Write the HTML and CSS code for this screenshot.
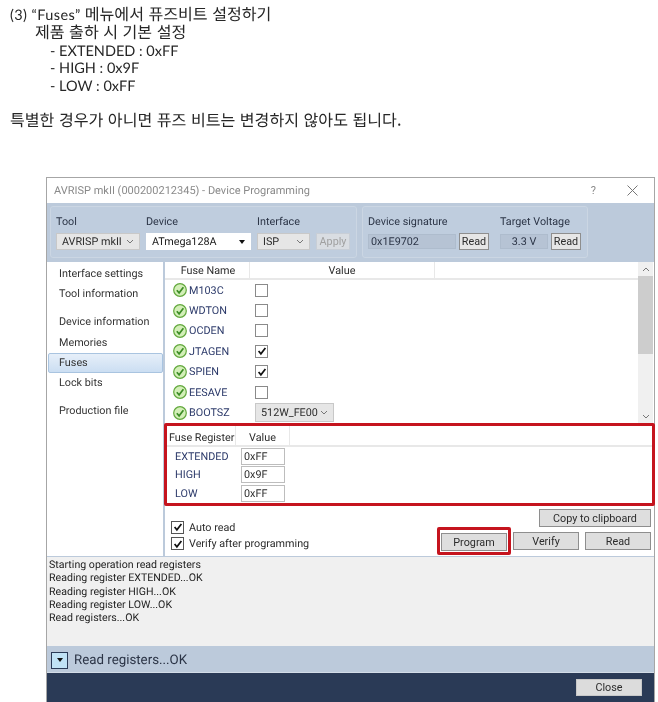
FILE: index.html
```html
<!DOCTYPE html>
<html lang="ko">
<head>
<meta charset="utf-8">
<title>Fuses</title>
<link rel="stylesheet" href="styles.css">
</head>
<body>
<svg class="defs" width="0" height="0" aria-hidden="true">
  <symbol id="ok" viewBox="0 0 14 14">
    <circle cx="7" cy="7" r="6.3" fill="#d3efb8" stroke="#62a83c" stroke-width="1.2"/>
    <path d="M3.8 7.2 6.1 9.8 10.4 4.3" fill="none" stroke="#3c8c26" stroke-width="1.7"/>
  </symbol>
  <symbol id="tick" viewBox="0 0 12 12">
    <path d="M2.6 6 4.9 8.8 9.4 3" fill="none" stroke="#111" stroke-width="1.7"/>
  </symbol>
  <symbol id="chev" viewBox="0 0 8 5">
    <path d="M1 1 4 4 7 1" fill="none" stroke="#777" stroke-width="1"/>
  </symbol>
</svg>

<section class="intro">
  <p class="l0">(3) “Fuses” <span class="ko">메뉴에서 퓨즈비트 설정하기</span></p>
  <p class="l1"><span class="ko">제품 출하 시 기본 설정</span></p>
  <p class="l2">- EXTENDED : 0xFF</p>
  <p class="l2">- HIGH : 0x9F</p>
  <p class="l2">- LOW : 0xFF</p>
  <p class="l0 note"><span class="ko">특별한 경우가 아니면 퓨즈 비트는 변경하지 않아도 됩니다.</span></p>
</section>

<main class="window">
  <header class="titlebar">
    <span class="title">AVRISP mkII (000200212345) - Device Programming</span>
    <span class="help">?</span>
    <svg class="x" width="11" height="11" viewBox="0 0 11 11"><path d="M.5.5 10.5 10.5M10.5.5.5 10.5" stroke="#777" fill="none"/></svg>
  </header>

  <div class="toolbar">
    <div class="group g1">
      <div class="field f-tool"><label>Tool</label><div class="combo">AVRISP mkII<svg class="chev" width="8" height="5"><use href="#chev"/></svg></div></div>
      <div class="field f-device"><label>Device</label><div class="combo white">ATmega128A<i class="caret"></i></div></div>
      <div class="field f-iface"><label>Interface</label><div class="combo">ISP<svg class="chev" width="8" height="5"><use href="#chev"/></svg></div></div>
      <button class="btn apply">Apply</button>
    </div>
    <div class="group g2">
      <div class="field"><label>Device signature</label><div class="pair"><div class="ro sig">0x1E9702</div><button class="btn read">Read</button></div></div>
      <div class="field"><label>Target Voltage</label><div class="pair"><div class="ro volt">3.3 V</div><button class="btn read">Read</button></div></div>
    </div>
  </div>

  <div class="body">
    <nav class="nav">
      <a class="item">Interface settings</a>
      <a class="item">Tool information</a>
      <a class="item gap">Device information</a>
      <a class="item">Memories</a>
      <a class="item on">Fuses</a>
      <a class="item">Lock bits</a>
      <a class="item gap">Production file</a>
    </nav>
    <div class="pane">
      <div class="fuses">
        <div class="list">
          <div class="thead">
            <span class="th c1">Fuse Name</span><span class="th c2">Value</span>
          </div>
          <div class="row"><svg class="ok" width="14" height="14"><use href="#ok"/></svg><span class="name">M103C</span><span class="cb"></span></div>
          <div class="row"><svg class="ok" width="14" height="14"><use href="#ok"/></svg><span class="name">WDTON</span><span class="cb"></span></div>
          <div class="row"><svg class="ok" width="14" height="14"><use href="#ok"/></svg><span class="name">OCDEN</span><span class="cb"></span></div>
          <div class="row"><svg class="ok" width="14" height="14"><use href="#ok"/></svg><span class="name">JTAGEN</span><span class="cb"><svg width="12" height="12"><use href="#tick"/></svg></span></div>
          <div class="row"><svg class="ok" width="14" height="14"><use href="#ok"/></svg><span class="name">SPIEN</span><span class="cb"><svg width="12" height="12"><use href="#tick"/></svg></span></div>
          <div class="row"><svg class="ok" width="14" height="14"><use href="#ok"/></svg><span class="name">EESAVE</span><span class="cb"></span></div>
          <div class="row"><svg class="ok" width="14" height="14"><use href="#ok"/></svg><span class="name">BOOTSZ</span><div class="combo boot">512W_FE00<svg class="chev" width="8" height="5"><use href="#chev"/></svg></div></div>
        </div>
        <div class="scroll">
          <svg width="8" height="5" class="up"><use href="#chev"/></svg>
          <div class="thumb"></div>
          <svg width="8" height="5" class="down"><use href="#chev"/></svg>
        </div>
      </div>

      <div class="registers">
        <div class="rhead"><span class="rh r1">Fuse Register</span><span class="rh r2">Value</span></div>
        <div class="rrow"><span class="rname">EXTENDED</span><span class="rval">0xFF</span></div>
        <div class="rrow"><span class="rname">HIGH</span><span class="rval">0x9F</span></div>
        <div class="rrow"><span class="rname">LOW</span><span class="rval">0xFF</span></div>
      </div>

      <div class="actions">
        <div class="checks">
          <div class="check"><span class="cb small"><svg width="12" height="12"><use href="#tick"/></svg></span>Auto read</div>
          <div class="check"><span class="cb small"><svg width="12" height="12"><use href="#tick"/></svg></span>Verify after programming</div>
        </div>
        <div class="buttons">
          <button class="btn big copy">Copy to clipboard</button>
          <div class="btnrow">
            <div class="mark"><button class="btn big wide">Program</button></div>
            <button class="btn big wide">Verify</button>
            <button class="btn big wide last">Read</button>
          </div>
        </div>
      </div>
    </div>
  </div>

  <div class="log">
    <div>Starting operation read registers</div>
    <div>Reading register EXTENDED...OK</div>
    <div>Reading register HIGH...OK</div>
    <div>Reading register LOW...OK</div>
    <div>Read registers...OK</div>
  </div>

  <div class="status">
    <span class="toggle"><i class="caret"></i></span>
    <span class="stext">Read registers...OK</span>
  </div>

  <footer class="foot"><button class="btn close">Close</button></footer>
</main>
</body>
</html>
```

FILE: styles.css
```css
* { box-sizing: border-box; }
html, body { margin: 0; padding: 0; background: #fff; }
body {
  width: 658px;
  height: 702px;
  overflow: hidden;
  font-family: Roboto, Lato, sans-serif;
  color: #222;
  text-rendering: geometricPrecision;
}
.defs { position: absolute; }

/* intro text */
.intro {
  padding: 7px 0 0 10px;
  height: 177px;
  font-family: Lato, "Noto Sans CJK KR", sans-serif;
  font-size: 14.5px;
  line-height: 17.8px;
  color: #262626;
  filter: blur(0.3px);
}
.intro p { margin: 0; white-space: nowrap; }
.l0 { letter-spacing: 0.4px; }
.ko { font-size: 16.1px; line-height: 0; letter-spacing: 0; font-family: "Noto Sans CJK KR", sans-serif; }
.l1 { padding-left: 25px; }
.l2 { padding-left: 40px; }
.note { margin-top: 17px !important; }

/* window */
.window {
  width: 609px;
  height: 525px;
  margin-left: 46px;
  border: 1px solid #a6a6a6;
  border-bottom: 0;
  display: flex;
  flex-direction: column;
  font-size: 10.8px;
  color: #2c2c2c;
  white-space: nowrap;
  filter: blur(0.3px);
}
.titlebar {
  flex: 0 0 25px;
  display: flex;
  align-items: center;
  padding: 0 16px 0 7px;
  background: #fff;
}
.title { flex: 1; color: #8a8a8a; font-size: 11px; }
.help { color: #8a8a8a; font-size: 11px; margin-right: 31px; }

/* toolbar */
.toolbar {
  flex: 0 0 59px;
  background: #bccadb;
  display: flex;
  gap: 5px;
  padding: 3px 0 4px 3px;
}
.group {
  height: 52px;
  border: 1px solid #cbd6e3;
  border-radius: 3px;
  background: #bfcdde;
  display: flex;
  padding: 8px 5px 0;
  color: #2b3446;
}
.g1 { width: 307px; align-items: flex-start; }
.g2 { width: 226px; gap: 11px; }
.field label { display: block; height: 18px; line-height: 14px; }
.f-tool { width: 90px; }
.f-device { width: 111px; }
.f-iface { width: 59px; }
.combo {
  height: 17px;
  border: 1px solid #c8c8c8;
  background: #e6e6e6;
  display: flex;
  align-items: center;
  justify-content: space-between;
  padding: 0 5px;
  color: #2c2c2c;
}
.chev { flex: none; }
.f-tool .combo { width: 84px; }
.f-device .combo { width: 105px; }
.f-iface .combo { width: 53px; }
.combo.white { background: #fff; border-color: #fff; color: #222; }
.caret {
  display: block;
  flex: none;
  width: 0;
  height: 0;
  border: 3px solid transparent;
  border-top: 4px solid #111;
  border-bottom: 0;
}
.btn {
  margin: 0;
  padding: 0;
  font: inherit;
  color: #2c2c2c;
  background: #e6e6e6;
  border: 1px solid #8e8e8e;
  height: 17px;
}
.apply {
  width: 34px;
  margin-top: 18px;
  color: #a0a0a0;
  background: #d9dde2;
  border-color: #c8ced6;
}
.pair { display: flex; gap: 3px; align-items: center; }
.ro {
  height: 15px;
  border: 1px solid #aebccd;
  background: #b6c3d4;
  line-height: 13px;
  padding-left: 2px;
  color: #2b3446;
}
.sig { width: 88px; }
.volt { width: 48px; text-align: center; padding: 0; }
.read { width: 30px; }

/* body */
.body { flex: 0 0 295px; display: flex; background: #fff; border-bottom: 1px solid #bccadb; }
.nav {
  flex: 0 0 118px;
  border-right: 2px solid #bccadb;
  padding-top: 2px;
  display: flex;
  flex-direction: column;
  color: #333;
}
.item {
  height: 20.4px;
  line-height: 20px;
  padding-left: 12px;
}
.item.gap { margin-top: 7.5px; }
.item.on {
  width: 115px;
  margin-left: 1px;
  background: linear-gradient(#e6eff9, #cbdef2);
  border: 1px solid #a9c4e0;
  border-radius: 2px;
  padding-left: 10px;
  line-height: 18px;
}
.pane { flex: 1; min-width: 0; display: flex; flex-direction: column; }
.fuses { flex: 0 0 161px; display: flex; }
.list { flex: 0 0 473px; }
.thead {
  height: 18px;
  display: flex;
  border-bottom: 2px solid #e8e8e8;
  line-height: 17px;
}
.th { border-right: 1px solid #e8e8e8; text-align: center; }
.c1 { width: 85px; padding-left: 2px; }
.c2 { width: 185px; }
.row {
  height: 20.4px;
  display: flex;
  align-items: center;
  padding-left: 8px;
}
.ok { flex: none; }
.name { width: 66px; padding-left: 2px; color: #2c3a6a; }
.cb {
  display: block;
  width: 13px;
  height: 13px;
  margin-left: 2px;
  border: 1px solid #8a8a8a;
  background: #fff;
}
.cb svg { display: block; margin: -0.5px; }
.combo.boot { width: 79px; height: 19px; margin-left: 2px; }
.scroll {
  flex: 0 0 15px;
  background: #f0f0f0;
  display: flex;
  flex-direction: column;
  align-items: center;
}
.scroll .up { transform: rotate(180deg); margin: 5px 0 4px; }
.thumb { width: 15px; height: 78px; background: #cdcdcd; }
.scroll .down { margin-top: auto; margin-bottom: 4px; }

/* registers (marked in red) */
.registers {
  height: 83px;
  width: 491px;
  border: 3px solid #c5141e;
  border-radius: 2px;
  background: #fff;
  margin-left: -1px;
}
.rhead { height: 21px; display: flex; border-bottom: 2px solid #e8e8e8; line-height: 24px; }
.rh { border-right: 1px solid #e8e8e8; }
.r1 { width: 69px; padding-left: 2px; }
.r2 { width: 54px; text-align: center; }
.rrow { height: 18.5px; display: flex; align-items: center; padding-left: 8px; }
.rname { width: 66px; color: #2c3a6a; }
.rval {
  width: 44px;
  height: 17px;
  border: 1px solid #bdbdbd;
  line-height: 15px;
  padding-left: 2px;
}

/* actions */
.actions { flex: 1; display: flex; justify-content: space-between; padding-right: 3px; }
.checks { padding: 13px 0 0 6px; }
.check { height: 16.5px; display: flex; align-items: center; gap: 5px; }
.cb.small { margin-left: 0; border-color: #555; }
.buttons { display: flex; flex-direction: column; align-items: flex-end; padding-top: 3px; }
.big { height: 18px; background: #dedede; border-color: #8e8e8e; }
.copy { width: 112px; }
.btnrow { display: flex; gap: 6px; align-items: center; }
.wide { width: 66px; }
.mark {
  border: 3px solid #c5141e;
  border-radius: 2px;
  padding: 3px 1px 2px;
  width: 74px;
  height: 28px;
  display: flex;
  justify-content: center;
  margin-right: -4px;
}

/* log */
.log {
  flex: 0 0 89px;
  background: #f0f0f0;
  padding: 1px 0 0 2px;
  font-size: 10.6px;
  line-height: 13.3px;
  color: #222;
}
.status {
  flex: 0 0 27px;
  background: #bccadb;
  border-bottom: 1px solid #d3dce7;
  display: flex;
  align-items: center;
  padding: 2px 0 0 4px;
  gap: 6px;
}
.toggle {
  width: 17px;
  height: 17px;
  background: #c0e2f5;
  border: 1px solid #2a3a56;
  display: flex;
  align-items: center;
  justify-content: center;
}
.stext { font-size: 13.3px; color: #2b3446; }
.foot {
  flex: 1;
  background: #2a3a56;
  display: flex;
  justify-content: flex-end;
  padding: 6px 12px 0 0;
}
.close { width: 66px; height: 17px; background: #dcdcdc; border-color: #c8c8c8; }
```
